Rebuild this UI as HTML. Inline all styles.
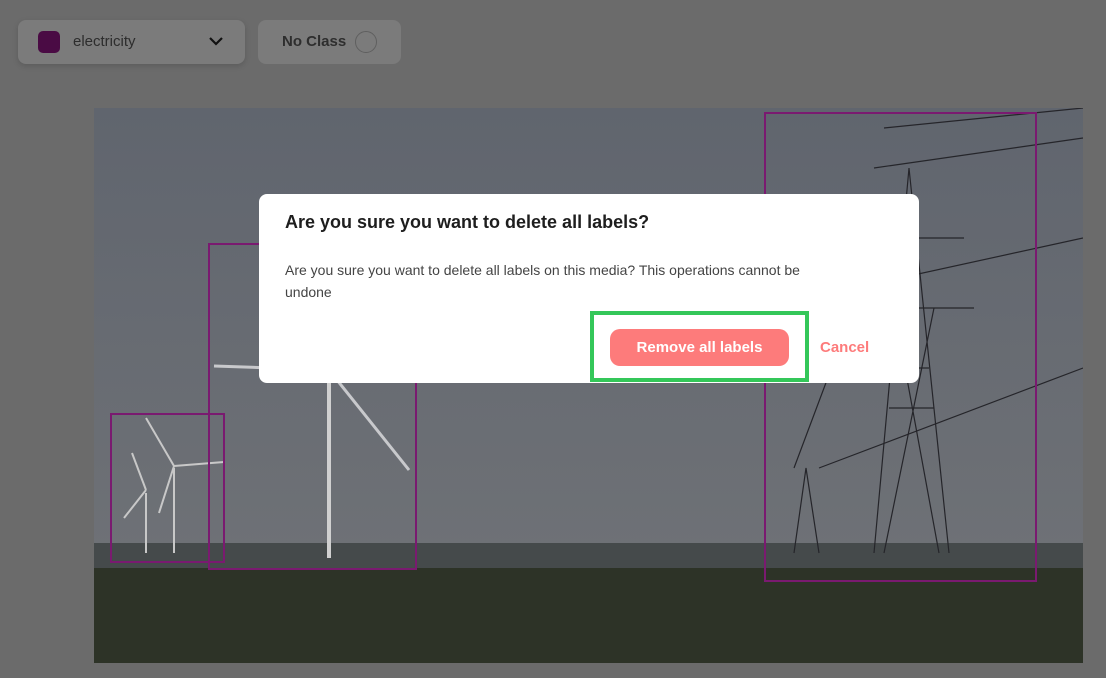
<!DOCTYPE html>
<html><head><style>
body{margin:0;width:1106px;height:678px;background:#6b6b6b;position:relative;overflow:hidden;font-family:"Liberation Sans",sans-serif}
.dd{position:absolute;left:18px;top:20px;width:227px;height:44px;background:#7b7b7b;border-radius:8px;box-shadow:0 2px 6px rgba(0,0,0,.15)}
.nc{position:absolute;left:258px;top:20px;width:143px;height:44px;background:#7b7b7b;border-radius:8px}
.dlg{position:absolute;left:259px;top:194px;width:660px;height:189px;background:#fff;border-radius:8px}
</style></head><body>
<div class="dd">
<div style="position:absolute;left:20px;top:11px;width:22px;height:22px;background:#4a0b44;border-radius:5px"></div>
<div style="position:absolute;left:55px;top:13px;font-size:15px;color:#2d2d2d">electricity</div>
<svg style="position:absolute;left:190px;top:15px" width="16" height="12"><path d="M2 3 L8 9 L14 3" stroke="#111" stroke-width="2.2" fill="none"/></svg>
</div>
<div class="nc">
<div style="position:absolute;left:24px;top:13px;font-size:15px;font-weight:bold;color:#2e2e2e">No Class</div>
<div style="position:absolute;left:97px;top:11px;width:20px;height:20px;border:1px solid #5f5f5f;border-radius:50%"></div>
</div>
<svg style="position:absolute;left:94px;top:108px" width="989" height="555">
<defs><linearGradient id="s" x1="0" y1="0" x2="0" y2="1"><stop offset="0" stop-color="#60656e"/><stop offset="0.8" stop-color="#6e7176"/></linearGradient></defs>
<rect width="989" height="555" fill="url(#s)"/>
<rect y="435" width="989" height="25" fill="#454a4b"/>
<rect y="460" width="989" height="95" fill="#2d3327"/>
<g stroke="#d0d0d0" stroke-width="4"><line x1="235" y1="270" x2="235" y2="450"/></g>
<g stroke="#c8c9cc" stroke-width="3"><line x1="235" y1="262" x2="315" y2="362"/><line x1="235" y1="262" x2="120" y2="258"/><line x1="235" y1="262" x2="240" y2="190"/></g>
<g stroke="#c8c8c8" stroke-width="2"><line x1="80" y1="360" x2="80" y2="445"/><line x1="80" y1="358" x2="52" y2="310"/><line x1="80" y1="358" x2="130" y2="354"/><line x1="80" y1="358" x2="65" y2="405"/><line x1="52" y1="385" x2="52" y2="445"/><line x1="52" y1="382" x2="38" y2="345"/><line x1="52" y1="382" x2="30" y2="410"/></g>
<g stroke="#25252a" stroke-width="1.2" fill="none">
<path d="M780 445 L815 60 L855 445 M795 300 L840 300 M800 260 L835 260 M770 130 L870 130 M760 200 L880 200 M790 445 L840 200 M845 445 L800 200"/>
<path d="M700 445 L712 360 L725 445"/>
<path d="M790 20 L989 0 M780 60 L989 30 M760 180 L989 130 M700 360 L760 200 M725 360 L989 260"/>
</g>
<g stroke="#7a1a70" stroke-width="2" fill="none">
<rect x="671" y="5" width="271" height="468"/>
<rect x="115" y="136" width="207" height="325"/>
<rect x="17" y="306" width="113" height="148"/>
</g>
</svg>
<div class="dlg">
<div style="position:absolute;left:26px;top:18px;font-size:18px;font-weight:bold;color:#1e1e1e">Are you sure you want to delete all labels?</div>
<div style="position:absolute;left:26px;top:65px;width:565px;font-size:14px;line-height:22px;color:#444">Are you sure you want to delete all labels on this media? This operations cannot be undone</div>
<div style="position:absolute;left:331px;top:117px;width:211px;height:63px;border:4px solid #34c759"></div>
<div style="position:absolute;left:351px;top:135px;width:179px;height:37px;background:#fd7b7b;border-radius:10px;color:#fff;font-weight:bold;font-size:15px;text-align:center;line-height:37px">Remove all labels</div>
<div style="position:absolute;left:561px;top:145px;font-size:15px;font-weight:bold;color:#fd7b7b">Cancel</div>
</div>
</body></html>
